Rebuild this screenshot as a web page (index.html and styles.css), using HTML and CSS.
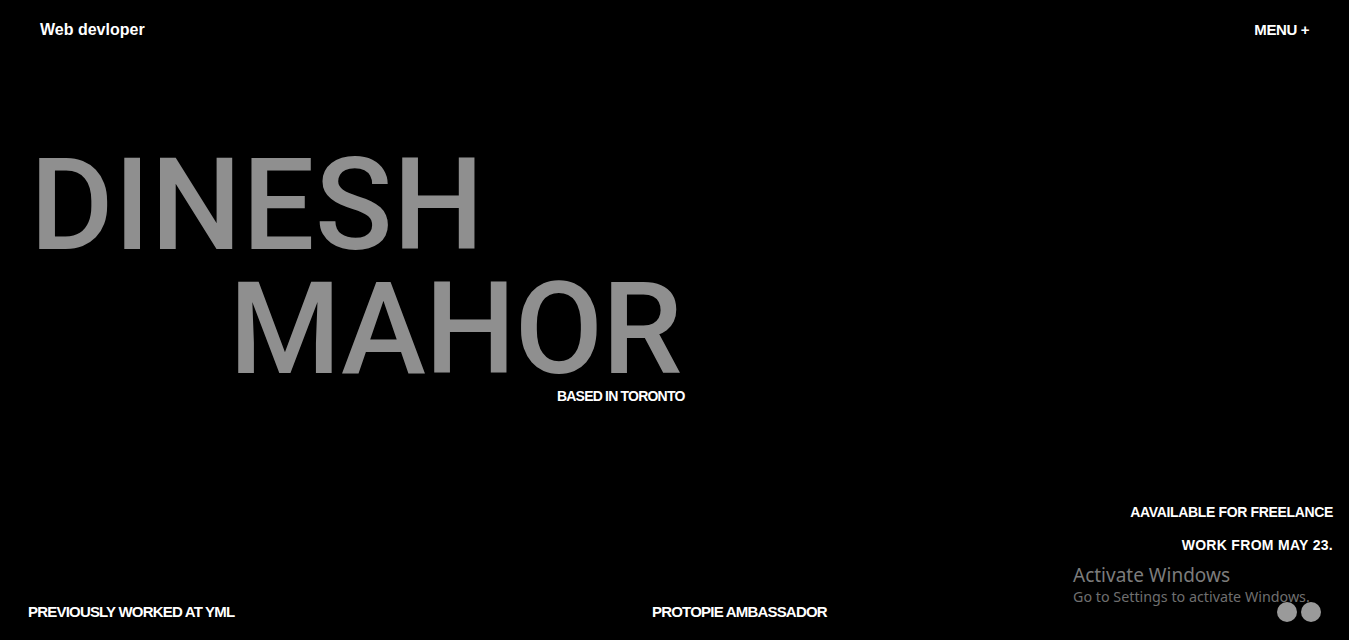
FILE: index.html
```html
<!DOCTYPE html>
<html lang="en">
<head>
<meta charset="utf-8">
<title>Dinesh Mahor</title>
<link rel="stylesheet" href="styles.css">
</head>
<body>
<div class="page">
  <header class="topbar">
    <div class="brand">Web devloper</div>
    <div class="menu">MENU +</div>
  </header>
  <section class="hero">
    <div class="name-line first">DINESH</div>
    <div class="name-line second">MAHOR</div>
    <div class="tagline">BASED IN TORONTO</div>
  </section>
  <div class="availability">
    <div class="avail-line">AAVAILABLE FOR FREELANCE</div>
    <div class="avail-line wide">WORK FROM MAY 23.</div>
  </div>
  <footer class="bottom">
    <div class="bottom-item">PREVIOUSLY WORKED AT YML</div>
    <div class="bottom-item">PROTOPIE AMBASSADOR</div>
  </footer>
  <div class="watermark">
    <div class="wm-title">Activate Windows</div>
    <div class="wm-sub">Go to Settings to activate Windows.</div>
  </div>
  <div class="dots"><span class="dot"></span><span class="dot"></span></div>
</div>
</body>
</html>
```

FILE: styles.css
```css
html, body {
  margin: 0;
  padding: 0;
  background: #000;
}
body {
  font-family: "Liberation Sans", Arial, sans-serif;
  color: #fff;
}
.page {
  position: relative;
  height: 640px;
  display: flex;
  flex-direction: column;
  overflow: hidden;
}
.topbar {
  display: flex;
  justify-content: space-between;
  align-items: center;
  padding: 21px 40px 0 40px;
  height: 18px;
}
.brand {
  font-size: 16px;
  font-weight: 700;
  line-height: 18px;
}
.menu {
  font-size: 15px;
  font-weight: 700;
  line-height: 18px;
  letter-spacing: -0.4px;
}
.hero {
  margin-top: 104px;
  padding-left: 30px;
}
.name-line {
  font-family: Roboto, "Liberation Sans", sans-serif;
  font-weight: 500;
  font-size: 128px;
  line-height: 124px;
  color: #8f8f8f;
  letter-spacing: 0.5px;
  white-space: nowrap;
}
.name-line.second {
  margin-left: 199px;
  letter-spacing: -1px;
}
.tagline {
  margin-left: 527px;
  font-size: 14px;
  line-height: 10px;
  font-weight: 700;
  letter-spacing: -0.8px;
}
.availability {
  margin-top: auto;
  align-self: flex-end;
  padding-right: 16px;
  text-align: right;
}
.avail-line {
  font-size: 14px;
  font-weight: 700;
  line-height: 33px;
  letter-spacing: -0.35px;
}
.avail-line.wide {
  letter-spacing: 0.3px;
}
.bottom {
  display: grid;
  grid-template-columns: 624px auto;
  padding: 41px 0 20px 28px;
}
.bottom-item {
  font-size: 15px;
  font-weight: 700;
  line-height: 17px;
  letter-spacing: -0.8px;
}
.watermark {
  position: absolute;
  left: 1073px;
  top: 563px;
  font-family: "Noto Sans", "Open Sans", sans-serif;
}
.wm-title {
  font-size: 19px;
  line-height: 24px;
  color: #7c7c7c;
}
.wm-sub {
  font-size: 14.3px;
  line-height: 20px;
  color: #6f6f6f;
}
.dots {
  position: absolute;
  left: 1277px;
  top: 602px;
  display: flex;
  gap: 4px;
}
.dot {
  width: 20px;
  height: 20px;
  border-radius: 50%;
  background: #9a9a9a;
}
```
